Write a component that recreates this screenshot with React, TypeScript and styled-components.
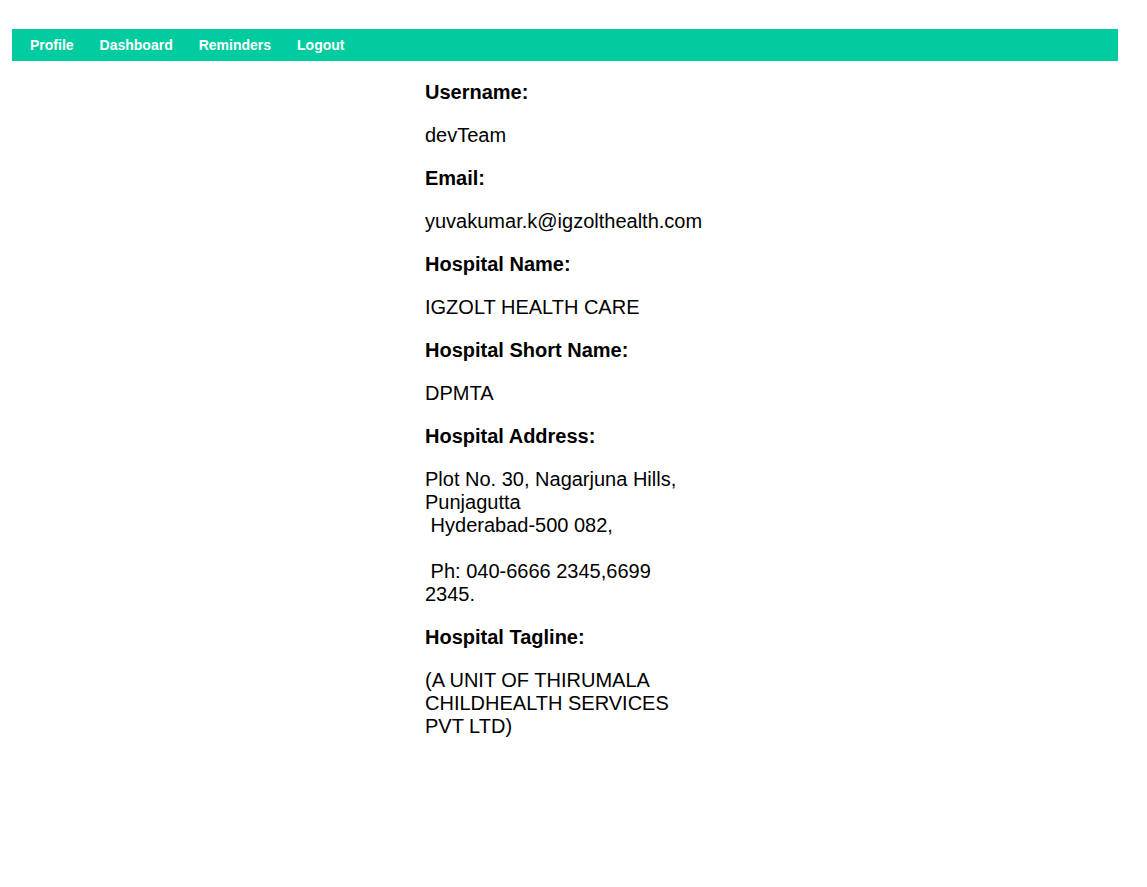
import React from "react";
import styled, { createGlobalStyle } from "styled-components";

const GlobalStyle = createGlobalStyle`
  html, body {
    margin: 0;
    padding: 0;
    background: #ffffff;
  }
  body {
    font-family: "Liberation Sans", Arial, sans-serif;
    color: #000000;
  }
`;

const Page = styled.div`
  padding: 29px 29px 40px 12px;
`;

const NavBar = styled.nav`
  display: flex;
  align-items: center;
  height: 32px;
  background: #00cc9f;
  padding-left: 5px;
`;

const NavItem = styled.a`
  display: flex;
  align-items: center;
  height: 100%;
  padding: 0 13px;
  color: #ffffff;
  font-size: 14px;
  font-weight: bold;
  text-decoration: none;
  cursor: pointer;
`;

const Content = styled.section`
  display: flex;
  justify-content: flex-start;
  padding-left: 413px;
`;

const Details = styled.div`
  width: 262px;
`;

const Field = styled.p<{ $label?: boolean; $pre?: boolean }>`
  margin: 20px 0;
  font-size: 20px;
  line-height: 23px;
  font-weight: ${(p) => (p.$label ? "bold" : "normal")};
  white-space: ${(p) => (p.$pre ? "pre-wrap" : "normal")};
`;

const fields: { label: string; value: string; pre?: boolean }[] = [
  { label: "Username:", value: "devTeam" },
  { label: "Email:", value: "yuvakumar.k@igzolthealth.com" },
  { label: "Hospital Name:", value: "IGZOLT HEALTH CARE" },
  { label: "Hospital Short Name:", value: "DPMTA" },
  {
    label: "Hospital Address:",
    value:
      "Plot No. 30, Nagarjuna Hills, Punjagutta\n Hyderabad-500 082,\n\n Ph: 040-6666 2345,6699 2345.",
    pre: true,
  },
  {
    label: "Hospital Tagline:",
    value: "(A UNIT OF THIRUMALA CHILDHEALTH SERVICES PVT LTD)",
  },
];

export default function App() {
  return (
    <>
      <GlobalStyle />
      <Page>
        <NavBar>
          <NavItem>Profile</NavItem>
          <NavItem>Dashboard</NavItem>
          <NavItem>Reminders</NavItem>
          <NavItem>Logout</NavItem>
        </NavBar>
        <Content>
          <Details>
            {fields.map((f) => (
              <React.Fragment key={f.label}>
                <Field $label>{f.label}</Field>
                <Field $pre={f.pre}>{f.value}</Field>
              </React.Fragment>
            ))}
          </Details>
        </Content>
      </Page>
    </>
  );
}
